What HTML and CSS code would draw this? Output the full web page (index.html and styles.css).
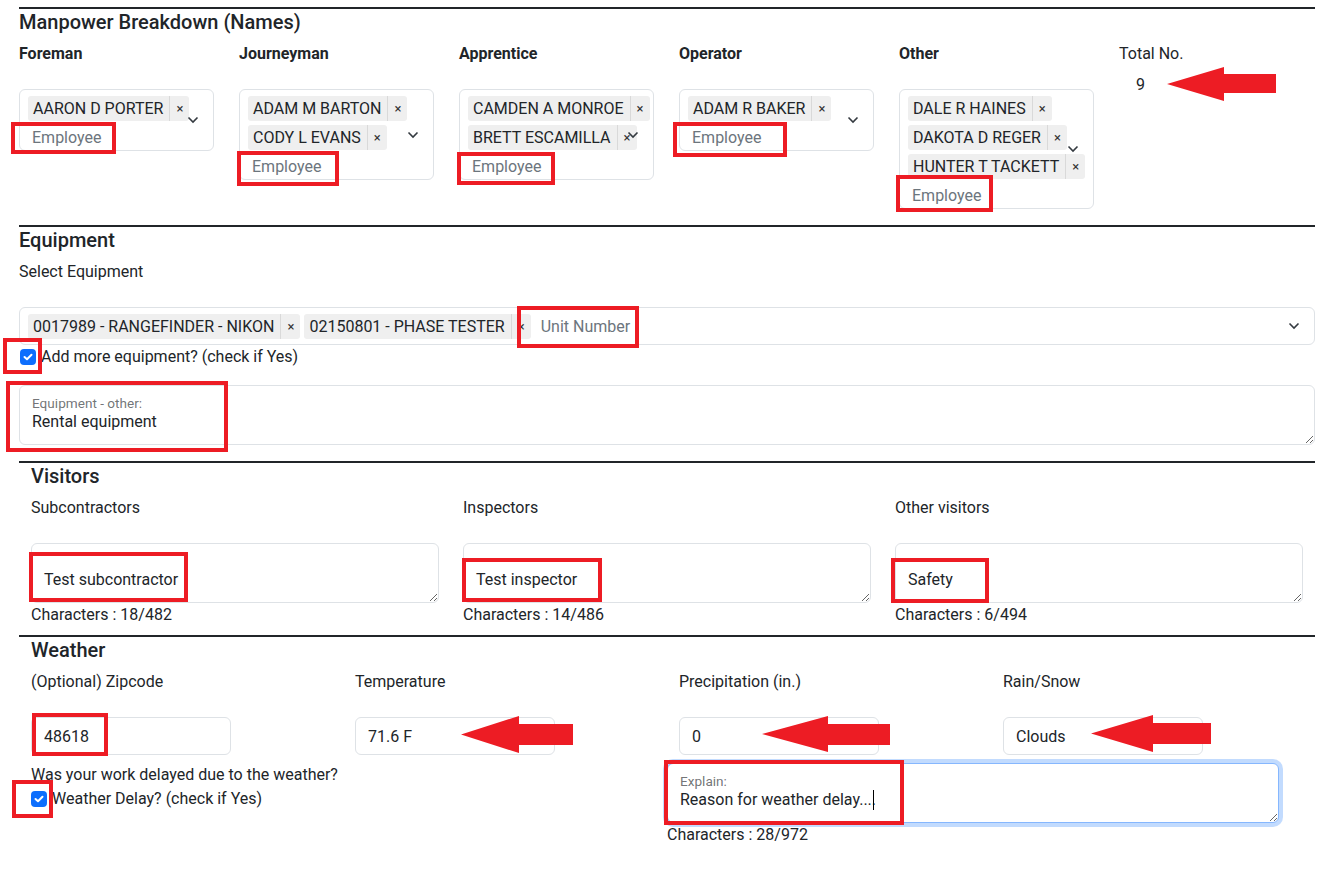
FILE: index.html
```html
<!DOCTYPE html>
<html lang="en">
  <head>
    <meta charset="UTF-8" />
    <meta name="viewport" content="width=device-width, initial-scale=1.0" />
    <title>Daily Report</title>
    <link rel="stylesheet" href="styles.css">
  </head>
  <body>
    <div class="page">
      <!-- manpower -->
      <div class="rule"></div>
      <h5>Manpower Breakdown (Names)</h5>
      <div class="crew">
        <div class="crew-col">
          <label class="crew-label">Foreman</label>
          <div class="ts">
            <div class="tag">AARON D PORTER<span class="x">&times;</span></div>
            <span class="ph">Employee</span>
            <svg class="chev" width="12" height="8" viewBox="0 0 12 8"><path d="M1.5 1.5 6 6l4.5-4.5" /></svg>
          </div>
        </div>
        <div class="crew-col">
          <label class="crew-label">Journeyman</label>
          <div class="ts">
            <div class="tag">ADAM M BARTON<span class="x">&times;</span></div>
            <div class="tag">CODY L EVANS<span class="x">&times;</span></div>
            <span class="ph">Employee</span>
            <svg class="chev" width="12" height="8" viewBox="0 0 12 8"><path d="M1.5 1.5 6 6l4.5-4.5" /></svg>
          </div>
        </div>
        <div class="crew-col">
          <label class="crew-label">Apprentice</label>
          <div class="ts">
            <div class="tag">CAMDEN A MONROE<span class="x">&times;</span></div>
            <div class="tag">BRETT ESCAMILLA<span class="x">&times;</span></div>
            <span class="ph">Employee</span>
            <svg class="chev" width="12" height="8" viewBox="0 0 12 8"><path d="M1.5 1.5 6 6l4.5-4.5" /></svg>
          </div>
        </div>
        <div class="crew-col">
          <label class="crew-label">Operator</label>
          <div class="ts">
            <div class="tag">ADAM R BAKER<span class="x">&times;</span></div>
            <span class="ph">Employee</span>
            <svg class="chev" width="12" height="8" viewBox="0 0 12 8"><path d="M1.5 1.5 6 6l4.5-4.5" /></svg>
          </div>
        </div>
        <div class="crew-col">
          <label class="crew-label">Other</label>
          <div class="ts">
            <div class="tag">DALE R HAINES<span class="x">&times;</span></div>
            <div class="tag">DAKOTA D REGER<span class="x">&times;</span></div>
            <div class="tag">HUNTER T TACKETT<span class="x">&times;</span></div>
            <span class="ph">Employee</span>
            <svg class="chev" width="12" height="8" viewBox="0 0 12 8"><path d="M1.5 1.5 6 6l4.5-4.5" /></svg>
          </div>
        </div>
        <div class="crew-col">
          <label class="total-label">Total No.</label>
          <div class="total">9</div>
        </div>
      </div>

      <!-- equipment -->
      <div class="rule gap"></div>
      <h5>Equipment</h5>
      <label class="field-label">Select Equipment</label>
      <div class="ts ts-wide">
        <div class="tag">0017989 - RANGEFINDER - NIKON<span class="x">&times;</span></div>
        <div class="tag">02150801 - PHASE TESTER<span class="x">&times;</span></div>
        <span class="ph ph-big">Unit Number</span>
        <svg class="chev" width="12" height="8" viewBox="0 0 12 8"><path d="M1.5 1.5 6 6l4.5-4.5" /></svg>
      </div>
      <div class="check-row">
        <span class="check"><svg width="10" height="8" viewBox="0 0 10 8"><path d="M1.5 4 4 6.3 8.5 1.7" /></svg></span>
        Add more equipment? (check if Yes)
      </div>
      <div class="floating equip-other">
        <textarea>Rental equipment</textarea>
        <label>Equipment - other:</label>
      </div>

      <!-- visitors -->
      <div class="rule gap"></div>
      <div class="indent">
        <h5>Visitors</h5>
        <div class="visitors">
          <div>
            <label class="field-label">Subcontractors</label>
            <div class="floating"><textarea>Test subcontractor</textarea></div>
            <div class="count">Characters : 18/482</div>
          </div>
          <div>
            <label class="field-label">Inspectors</label>
            <div class="floating"><textarea>Test inspector</textarea></div>
            <div class="count">Characters : 14/486</div>
          </div>
          <div>
            <label class="field-label">Other visitors</label>
            <div class="floating"><textarea>Safety</textarea></div>
            <div class="count">Characters : 6/494</div>
          </div>
        </div>
      </div>

      <!-- weather -->
      <div class="rule small-gap"></div>
      <div class="indent">
        <h5>Weather</h5>
        <div class="weather">
          <div>
            <label class="field-label">(Optional) Zipcode</label>
            <input class="fc" value="48618" readonly>
          </div>
          <div>
            <label class="field-label">Temperature</label>
            <input class="fc" value="71.6 F" readonly>
          </div>
          <div>
            <label class="field-label">Precipitation (in.)</label>
            <input class="fc" value="0" readonly>
          </div>
          <div>
            <label class="field-label">Rain/Snow</label>
            <input class="fc" value="Clouds" readonly>
          </div>
        </div>
        <div class="delay">
          <div>
            <div>Was your work delayed due to the weather?</div>
            <div class="check-row">
              <span class="check"><svg width="10" height="8" viewBox="0 0 10 8"><path d="M1.5 4 4 6.3 8.5 1.7" /></svg></span>
              Weather Delay? (check if Yes)
            </div>
          </div>
          <div>
            <div class="floating focused">
              <textarea>Reason for weather delay....</textarea>
              <label>Explain:</label>
              <span class="caret"></span>
            </div>
            <div class="count">Characters : 28/972</div>
          </div>
        </div>
      </div>

      <!-- annotation marks -->
      <div class="mark m-foreman"></div>
      <div class="mark m-journey"></div>
      <div class="mark m-apprentice"></div>
      <div class="mark m-operator"></div>
      <div class="mark m-other"></div>
      <div class="mark m-unit"></div>
      <div class="mark m-check1"></div>
      <div class="mark m-equip"></div>
      <div class="mark m-subcon"></div>
      <div class="mark m-inspector"></div>
      <div class="mark m-safety"></div>
      <div class="mark m-zip"></div>
      <div class="mark m-check2"></div>
      <div class="mark m-explain"></div>

      <svg class="arrow a-total" width="109" height="34" viewBox="0 0 109 34"><polygon points="0,17 57,0 57,7 109,7 109,26 57,26 57,34" /></svg>
      <svg class="arrow a-temp" width="112" height="37" viewBox="0 0 112 37"><polygon points="0,18.5 58,0 58,8 112,8 112,29 58,29 58,37" /></svg>
      <svg class="arrow a-precip" width="128" height="36" viewBox="0 0 128 36"><polygon points="0,18 66,0 66,8 128,8 128,29 66,29 66,36" /></svg>
      <svg class="arrow a-rain" width="120" height="37" viewBox="0 0 120 37"><polygon points="0,18.5 62,0 62,8 120,8 120,29 62,29 62,37" /></svg>
    </div>
  </body>
</html>
```

FILE: styles.css
```css
* {
  padding: 0;
  margin: 0;
  box-sizing: border-box;
}

body {
  font-family: Roboto, "Noto Sans", sans-serif;
  font-size: 16px;
  line-height: 24px;
  color: #212529;
  background: #fff;
}

.page {
  position: relative;
  padding: 7px 13px 0 19px;
}

.rule {
  border-top: 2px solid #212529;
}

.rule.gap {
  margin-top: 16px;
}

.rule.small-gap {
  margin-top: 8px;
}

h5 {
  font-size: 20px;
  font-weight: 500;
  line-height: 24px;
  margin: 1px 0 8px;
}

.indent {
  padding-left: 12px;
}

.field-label {
  display: block;
  margin-bottom: 23px;
}

/* manpower */
.crew {
  display: grid;
  grid-template-columns: repeat(6, 220px);
  align-items: start;
}

.crew-label {
  display: block;
  font-weight: 700;
  margin-bottom: 23px;
}

.total-label {
  display: block;
  margin-bottom: 7px;
}

.total {
  padding-left: 17px;
}

/* tom-select look */
.ts {
  position: relative;
  width: 195px;
  display: flex;
  flex-wrap: wrap;
  align-items: center;
  gap: 4px 4px;
  padding: 6px 2px 0 8px;
  border: 1px solid #dee2e6;
  border-radius: 6px;
  background: #fff;
}

.ts-wide {
  width: 100%;
  padding-bottom: 5px;
}

.tag {
  display: flex;
  align-items: center;
  height: 25px;
  padding-left: 5px;
  background: #efefef;
  border-radius: 3px;
  white-space: nowrap;
}

.tag .x {
  display: flex;
  align-items: center;
  justify-content: center;
  width: 20px;
  height: 25px;
  margin-left: 6px;
  border-left: 1px solid #d9d9d9;
  font-size: 13px;
  color: #333;
}

.ph {
  min-width: 100px;
  flex: 1;
  height: 25px;
  line-height: 25px;
  padding-left: 4px;
  color: #6c757d;
}

.ph-big {
  padding-left: 6px;
}

.chev {
  position: absolute;
  right: 14px;
  top: 50%;
  margin-top: -4px;
  fill: none;
  stroke: #343a40;
  stroke-width: 1.6;
}

/* checkbox */
.check-row {
  display: flex;
  align-items: center;
  gap: 5px;
  padding-left: 1px;
}

.check {
  display: flex;
  align-items: center;
  justify-content: center;
  width: 16px;
  height: 16px;
  border-radius: 4px;
  background: #0d6efd;
}

.check svg {
  fill: none;
  stroke: #fff;
  stroke-width: 2;
  stroke-linecap: round;
  stroke-linejoin: round;
}

/* floating textareas */
.floating {
  position: relative;
}

.floating textarea {
  display: block;
  width: 100%;
  height: 60px;
  padding: 24px 12px 8px;
  font: inherit;
  color: #212529;
  border: 1px solid #dee2e6;
  border-radius: 6px;
  resize: vertical;
  outline: none;
}

.floating label {
  position: absolute;
  top: 9px;
  left: 13px;
  font-size: 13.6px;
  line-height: 18px;
  color: rgba(33, 37, 41, 0.65);
}

.floating.focused textarea {
  border-color: #86b7fe;
  box-shadow: 0 0 0 4px rgba(13, 110, 253, 0.25);
}

.caret {
  position: absolute;
  left: 206px;
  top: 27px;
  width: 1px;
  height: 20px;
  background: #000;
}

.equip-other {
  margin-top: 16px;
}

/* visitors */
.visitors {
  display: grid;
  grid-template-columns: repeat(3, 432px);
}

.visitors .floating {
  width: 408px;
}

/* weather */
.weather {
  display: grid;
  grid-template-columns: repeat(4, 324px);
}

.fc {
  display: block;
  width: 200px;
  height: 38px;
  padding: 6px 12px;
  font: inherit;
  color: #212529;
  border: 1px solid #dee2e6;
  border-radius: 6px;
  outline: none;
}

.delay {
  display: grid;
  grid-template-columns: 636px 612px;
  margin-top: 8px;
}

.delay .check-row {
  padding-left: 0;
}

/* red annotations */
.mark {
  position: absolute;
  border: 4px solid #ed1c24;
}

.m-foreman { left: 11px; top: 122px; width: 105px; height: 32px; }
.m-journey { left: 237px; top: 151px; width: 102px; height: 35px; }
.m-apprentice { left: 457px; top: 152px; width: 98px; height: 33px; }
.m-operator { left: 673px; top: 122px; width: 114px; height: 35px; }
.m-other { left: 896px; top: 175px; width: 97px; height: 37px; }
.m-unit { left: 517px; top: 306px; width: 122px; height: 42px; }
.m-check1 { left: 3px; top: 338px; width: 39px; height: 36px; }
.m-equip { left: 6px; top: 381px; width: 222px; height: 71px; }
.m-subcon { left: 29px; top: 552px; width: 159px; height: 50px; }
.m-inspector { left: 462px; top: 558px; width: 140px; height: 44px; }
.m-safety { left: 891px; top: 558px; width: 98px; height: 45px; }
.m-zip { left: 32px; top: 713px; width: 76px; height: 43px; }
.m-check2 { left: 12px; top: 780px; width: 41px; height: 38px; }
.m-explain { left: 664px; top: 760px; width: 240px; height: 65px; }

.arrow {
  position: absolute;
  fill: #ed1c24;
}

.a-total { left: 1167px; top: 67px; }
.a-temp { left: 461px; top: 716px; }
.a-precip { left: 762px; top: 716px; }
.a-rain { left: 1091px; top: 715px; }
```
